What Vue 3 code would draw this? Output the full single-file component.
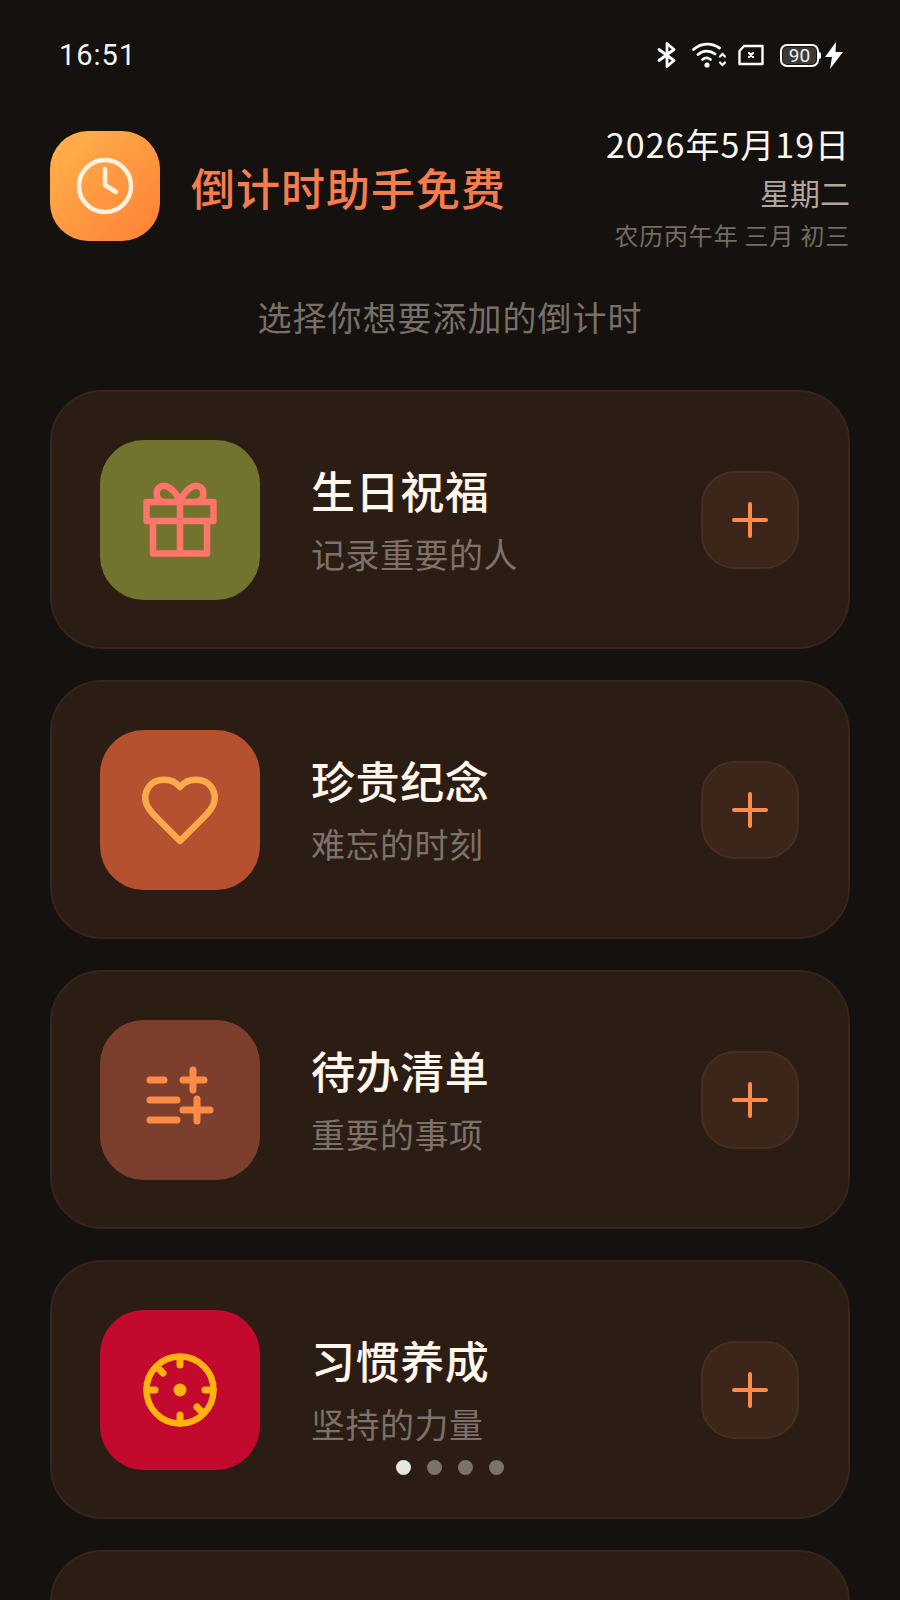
<script setup>
const cards = [
  { title: '生日祝福', sub: '记录重要的人', bg: '#737330', icon: 'gift' },
  { title: '珍贵纪念', sub: '难忘的时刻', bg: '#b5512e', icon: 'heart' },
  { title: '待办清单', sub: '重要的事项', bg: '#7c3f2e', icon: 'list' },
  { title: '习惯养成', sub: '坚持的力量', bg: '#c30a2e', icon: 'target' }
]
const dots = [true, false, false, false]
</script>

<template>
  <div class="page">
    <div class="status">
      <span class="time">16:51</span>
      <div class="status-icons">
        <svg class="ic-bt" width="20" height="26" viewBox="0 0 20 26" fill="none" stroke="#fff" stroke-width="2.8" stroke-linejoin="round" stroke-linecap="round">
          <path d="M2 7.5 17 18.5 10 24.5V1.5L17 7.5 2 18.5" />
        </svg>
        <svg class="ic-wifi" width="34" height="26" viewBox="0 0 34 26" fill="none" stroke="#fff" stroke-width="2.8" stroke-linecap="round">
          <path d="M1.5 7.5C9 .5 20 .5 27.5 6" />
          <path d="M6 12.5C11 8 18 8 23 12" />
          <path d="M10.5 17.5C13 15.5 16 15.5 18.5 17.5" />
          <circle cx="15" cy="23" r="2.6" fill="#fff" stroke="none" />
          <path stroke-width="2.2" d="M28 14.5 30.5 12 33 14.5M28 20.5 30.5 23 33 20.5" />
        </svg>
        <svg class="ic-sim" width="26" height="22" viewBox="0 0 26 22" fill="none" stroke="#fff" stroke-width="2.4" stroke-linejoin="round">
          <path d="M6 2H24.5V20H1.5V7Z" />
          <path stroke-width="2.2" stroke-linecap="round" d="M11 9 15 13M15 9 11 13" />
        </svg>
        <div class="battery">
          <span class="level">90</span>
          <i class="cap"></i>
        </div>
        <svg class="ic-bolt" width="18" height="27" viewBox="0 0 18 27" fill="#fff">
          <path d="M11 0 0 15H7L5 27 18 10H10.5Z" />
        </svg>
      </div>
    </div>

    <header class="header">
      <div class="logo">
        <svg width="60" height="60" viewBox="0 0 60 60" fill="none" stroke="#fff3e0" stroke-width="4.5" stroke-linecap="round" stroke-linejoin="round">
          <circle cx="30" cy="30" r="26" />
          <path d="M30 13V29L41 36" />
        </svg>
      </div>
      <h1 class="app-name">倒计时助手免费</h1>
      <div class="date">
        <div class="date-main">2026年5月19日</div>
        <div class="date-week">星期二</div>
        <div class="date-lunar">农历丙午年 三月 初三</div>
      </div>
    </header>

    <p class="hint">选择你想要添加的倒计时</p>

    <div class="list">
      <div v-for="c in cards" :key="c.title" class="card">
        <div class="tile" :style="{ background: c.bg }">
          <svg v-if="c.icon === 'gift'" width="80" height="80" viewBox="0 0 80 80" fill="none" stroke="#ff7668" stroke-width="6.5" stroke-linejoin="round">
            <rect x="6.5" y="22" width="67" height="19" />
            <path d="M13 41V73.5H67V41M40 22V73.5" />
            <path stroke-linecap="round" d="M40 21C34 9 27 5 22 6 15 8 15 18 21 21M40 21C46 9 53 5 58 6 65 8 65 18 59 21" />
          </svg>
          <svg v-else-if="c.icon === 'heart'" width="80" height="80" viewBox="0 0 80 80" fill="none" stroke="#ffa94d" stroke-width="6.5" stroke-linejoin="round">
            <path d="M40 17C35 11 28 9 21 10 10 11 3 22 6 33 8 39 12 43 16 47L40 71 64 47C68 43 72 39 74 33 77 22 70 11 59 10 52 9 45 11 40 17Z" />
          </svg>
          <svg v-else-if="c.icon === 'list'" width="80" height="80" viewBox="0 0 80 80" fill="none" stroke="#ff8a45" stroke-width="7" stroke-linecap="round">
            <path d="M10 20H24M10 40H37M10 60H37" />
            <path d="M43 20H64M53 10V30" />
            <path d="M43 50H70M57 39V61" />
          </svg>
          <svg v-else width="80" height="80" viewBox="0 0 80 80" fill="none" stroke="#ffb30f" stroke-width="6.5" stroke-linecap="round">
            <circle cx="40" cy="40" r="33.5" />
            <circle cx="40" cy="40" r="6.5" fill="#ffb30f" stroke="none" />
            <path stroke-width="7" d="M40 7V15M40 65V73M7 40H15M65 40H73M17 17 23 23M57 57 63 63" />
          </svg>
        </div>
        <div class="text">
          <div class="title">{{ c.title }}</div>
          <div class="sub">{{ c.sub }}</div>
        </div>
        <div class="add">
          <svg width="36" height="36" viewBox="0 0 36 36" fill="none" stroke="#ff8c4b" stroke-width="4" stroke-linecap="round">
            <path d="M2 18H34M18 2V34" />
          </svg>
        </div>
      </div>
      <div class="card"></div>
    </div>

    <div class="dots">
      <span v-for="(on, i) in dots" :key="i" class="dot" :class="{ on }"></span>
    </div>
  </div>
</template>

<style scoped>
.page {
  position: relative;
  width: 900px;
  height: 1600px;
  overflow: hidden;
  background: #15110e;
  color: #fff;
  font-family: "Noto Sans CJK SC", "Noto Sans", sans-serif;
}

.status {
  display: flex;
  align-items: center;
  justify-content: space-between;
  height: 110px;
  padding: 0 57px 0 59px;
}

.time {
  font-family: Roboto, sans-serif;
  font-size: 29px;
  letter-spacing: 1px;
  color: #f5f5f5;
}

.status-icons {
  display: flex;
  align-items: center;
}

.ic-bt {
  margin-right: 15px;
}

.ic-wifi {
  margin-right: 12px;
}

.ic-sim {
  margin-right: 16px;
}

.battery {
  position: relative;
  display: flex;
  align-items: center;
  justify-content: center;
  box-sizing: border-box;
  width: 39px;
  height: 23px;
  margin-right: 6px;
  border: 2px solid #fff;
  border-radius: 7px;
  background: #3c3a38;
  box-shadow: inset 0 0 0 1px #15110e;
}

.level {
  font-family: Roboto, sans-serif;
  font-size: 19px;
  line-height: 1;
  color: #f0f0f0;
}

.cap {
  position: absolute;
  right: -4px;
  top: 6px;
  width: 2px;
  height: 7px;
  border-radius: 0 2px 2px 0;
  background: #fff;
}

.header {
  display: flex;
  align-items: flex-start;
  height: 132px;
  margin-top: 12px;
  padding: 0 50px;
}

.logo {
  display: flex;
  align-items: center;
  justify-content: center;
  flex: none;
  width: 110px;
  height: 110px;
  margin-top: 9px;
  border-radius: 38px;
  background: linear-gradient(135deg, #ffb44c, #ff7f36);
}

.app-name {
  flex: 1;
  margin: 32px 0 0 31px;
  font-size: 44px;
  font-weight: 500;
  line-height: 66px;
  letter-spacing: 1px;
  color: #f47d4b;
}

.date {
  margin-top: -2px;
  text-align: right;
}

.date-main {
  font-size: 34px;
  line-height: 48px;
  letter-spacing: 1px;
  color: #fbf7f2;
}

.date-week {
  font-size: 30px;
  line-height: 49px;
  color: #b0a79e;
}

.date-lunar {
  font-size: 24px;
  line-height: 36px;
  letter-spacing: 0.8px;
  color: #746c64;
}

.hint {
  margin: 38px 0 0;
  font-size: 34px;
  line-height: 50px;
  letter-spacing: 1px;
  text-align: center;
  color: #787068;
}

.list {
  display: flex;
  flex-direction: column;
  gap: 31px;
  margin-top: 48px;
  padding: 0 50px;
}

.card {
  display: flex;
  align-items: center;
  flex: none;
  box-sizing: border-box;
  height: 259px;
  padding: 0 49px 0 48px;
  border: 2px solid #35251a;
  border-radius: 52px;
  background: #2b1c14;
}

.tile {
  display: flex;
  align-items: center;
  justify-content: center;
  flex: none;
  width: 160px;
  height: 160px;
  border-radius: 44px;
}

.text {
  flex: 1;
  margin-left: 51px;
}

.title {
  font-size: 44px;
  font-weight: 500;
  line-height: 62px;
  letter-spacing: 0.6px;
  color: #fff6ec;
}

.sub {
  margin-top: 7px;
  font-size: 34px;
  line-height: 52px;
  letter-spacing: 0.5px;
  color: #7d7168;
}

.add {
  display: flex;
  align-items: center;
  justify-content: center;
  flex: none;
  box-sizing: border-box;
  width: 98px;
  height: 98px;
  border: 2px solid #442f22;
  border-radius: 34px;
  background: #3c2619;
}

.dots {
  position: absolute;
  left: 0;
  right: 0;
  top: 1460px;
  display: flex;
  justify-content: center;
  gap: 16px;
}

.dot {
  width: 15px;
  height: 15px;
  border-radius: 50%;
  background: #7c7268;
}

.dot.on {
  background: #e8e6e4;
}
</style>
